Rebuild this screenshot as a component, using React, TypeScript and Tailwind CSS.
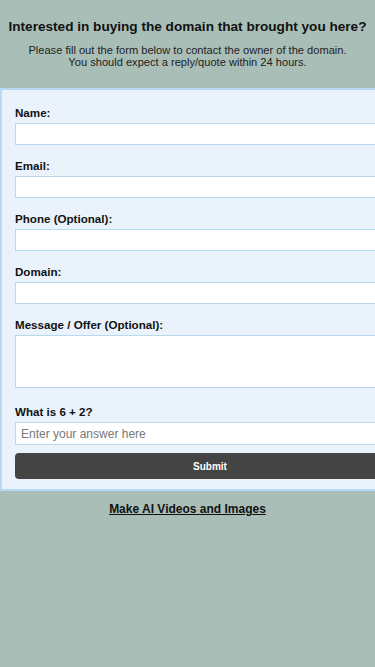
export default function App() {
  const fields: { label: string; tall?: boolean }[] = [
    { label: "Name:" },
    { label: "Email:" },
    { label: "Phone (Optional):" },
    { label: "Domain:" },
    { label: "Message / Offer (Optional):", tall: true },
  ];

  return (
    <div className="min-h-[667px] w-full overflow-x-hidden bg-[#a9beb7] font-['Liberation_Sans',Arial,sans-serif] text-[#111]">
      <header className="px-2 pt-[18px] text-center">
        <h1 className="text-[13.6px] font-bold leading-[17px] whitespace-nowrap">
          Interested in buying the domain that brought you here?
        </h1>
        <p className="mt-[9px] text-[11.1px] leading-[12px] text-[#222]">
          Please fill out the form below to contact the owner of the domain.
          <br />
          You should expect a reply/quote within 24 hours.
        </p>
      </header>

      <form className="mt-[20px] w-[420px] border-2 border-[#b5daf2] bg-[#eaf3fb] pl-[13px] pr-[13px] pt-[17px] pb-[10px]">
        {fields.map((f) => (
          <div key={f.label} className={f.tall ? "mb-[18px]" : "mb-[15px]"}>
            <label className="block text-[11.6px] font-bold leading-[12px] mb-[4px]">{f.label}</label>
            {f.tall ? (
              <textarea className="block h-[53px] w-full resize-none border border-[#b9d9ee] bg-white" />
            ) : (
              <input className="block h-[22px] w-full border border-[#b9d9ee] bg-white" />
            )}
          </div>
        ))}
        <div>
          <label className="block text-[11.6px] font-bold leading-[12px] mb-[4px]">What is 6 + 2?</label>
          <input
            placeholder="Enter your answer here"
            className="block h-[23px] w-full border border-[#b9d9ee] bg-white px-[5px] text-[12px] placeholder:text-[#777]"
          />
        </div>
        <button
          type="button"
          className="mt-[8px] block h-[26px] w-full rounded-[4px] bg-[#444] text-[10px] font-bold text-white"
        >
          Submit
        </button>
      </form>

      <div className="mt-[5px] text-center">
        <a className="text-[12px] font-bold leading-[14px] underline text-[#111]">Make AI Videos and Images</a>
      </div>
    </div>
  );
}
